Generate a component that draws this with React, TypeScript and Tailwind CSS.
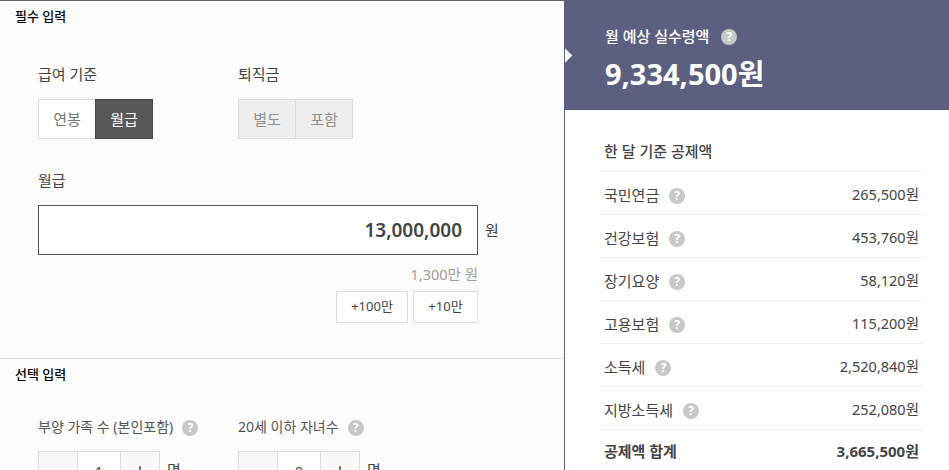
import { ReactNode } from 'react';

const FONT = '"Noto Sans", "Noto Sans CJK KR", sans-serif';

const Help = ({ className = '' }: { className?: string }) => (
  <span className={`inline-flex h-4 w-4 shrink-0 items-center justify-center rounded-full bg-[#c8c8c8] text-[12px] leading-none font-bold text-white ${className}`}>?</span>
);

const Toggle = ({ items, active, disabled }: { items: string[]; active?: number; disabled?: boolean }) => (
  <div className="flex h-10 w-[115px]">
    {items.map((item, i) => (
      <div
        key={item}
        className={`flex h-10 flex-1 items-center justify-center border text-[15px] ${i > 0 ? '-ml-px' : ''} ${
          i === active
            ? 'z-10 border-[#484848] bg-[#585858] text-white'
            : disabled
              ? 'border-[#dcdcdc] bg-[#eeeeee] text-[#8f8f8f]'
              : 'border-[#dcdcdc] bg-white text-[#777777]'
        }`}
      >
        {item}
      </div>
    ))}
  </div>
);

const Stepper = ({ value }: { value: string }) => (
  <div className="flex items-start">
    <div className="flex h-10 w-[122px] border border-[#dcdcdc] bg-white text-[#444]">
      <div className="flex w-[39px] items-center justify-center border-r border-[#dcdcdc] bg-[#f8f8f8]" />
      <div className="flex flex-1 items-center justify-center text-[14px]">{value}</div>
      <div className="flex w-[39px] items-center justify-center border-l border-[#dcdcdc] bg-[#f8f8f8] text-[20px] leading-none">+</div>
    </div>
    <span className="ml-[7px] pt-[9px] text-[15px] leading-[20px] text-[#444]">명</span>
  </div>
);

const Row = ({ label, value }: { label: string; value: string }) => (
  <div className="flex h-[43px] items-center justify-between border-t border-[#f0f0f0] px-[5px] pt-1 text-[#444]">
    <div className="flex items-center text-[15px]">
      <span>{label}</span>
      <Help className="ml-[10px] mt-0.5" />
    </div>
    <span className="text-[14.5px]">{value}</span>
  </div>
);

const Section = ({ title, children }: { title: string; children: ReactNode }) => (
  <section className="pl-[15px]">
    <h2 className="pt-[6px] text-[13px] leading-[18px] font-medium text-black">{title}</h2>
    {children}
  </section>
);

export default function App() {
  return (
    <div className="flex h-[470px] w-[949px] overflow-hidden bg-white" style={{ fontFamily: FONT }}>
      {/* 입력 영역 */}
      <div className="h-[470px] w-[565px] shrink-0 overflow-hidden border-t border-r border-t-[#666] border-r-[#5c5f7f] bg-[#fcfcfc]">
        <div className="h-[358px] border-b border-[#dddddd]">
          <Section title="필수 입력">
            <div className="mt-[39px] flex pl-[23px]">
              <div className="w-[200px]">
                <div className="text-[15px] leading-5 text-[#444]">급여 기준</div>
                <div className="mt-[15px]">
                  <Toggle items={['연봉', '월급']} active={1} />
                </div>
              </div>
              <div>
                <div className="text-[15px] leading-5 text-[#444]">퇴직금</div>
                <div className="mt-[15px]">
                  <Toggle items={['별도', '포함']} disabled />
                </div>
              </div>
            </div>
            <div className="mt-[31px] pl-[23px] text-[15px] leading-5 text-[#444]">월급</div>
            <div className="mt-[15px] flex items-center pl-[23px]">
              <div className="flex h-[50px] w-[440px] items-center justify-end border border-[#555] bg-white pr-[15px] text-[19px] font-semibold text-[#444]">
                13,000,000
              </div>
              <span className="ml-[7px] text-[15px] text-[#444]">원</span>
            </div>
            <div className="mt-[9px] w-[463px] text-right text-[14.5px] leading-5 text-[#a59d96]">1,300만 원</div>
            <div className="mt-[7px] flex w-[463px] justify-end gap-[5px]">
              <div className="flex h-8 w-[72px] items-center justify-center border border-[#dcdcdc] bg-white text-[13px] text-[#444]">+100만</div>
              <div className="flex h-8 w-[65px] items-center justify-center border border-[#dcdcdc] bg-white text-[13px] text-[#444]">+10만</div>
            </div>
          </Section>
        </div>
        <Section title="선택 입력">
          <div className="mt-[34px] flex pl-[23px]">
            <div className="w-[200px]">
              <div className="flex items-center text-[14px] leading-5 text-[#555]">
                부양 가족 수 (본인포함)
                <Help className="ml-[9px] mt-0.5" />
              </div>
              <div className="mt-[14px]">
                <Stepper value="1" />
              </div>
            </div>
            <div>
              <div className="flex items-center text-[14px] leading-5 text-[#555]">
                20세 이하 자녀수
                <Help className="ml-[9px] mt-0.5" />
              </div>
              <div className="mt-[14px]">
                <Stepper value="0" />
              </div>
            </div>
          </div>
        </Section>
      </div>

      {/* 결과 영역 */}
      <div className="relative h-[470px] flex-1 overflow-hidden">
        <div className="absolute top-[50px] -left-[6px] h-[11px] w-[11px] rotate-45 bg-[#fcfcfc]" />
        <div className="h-[110px] bg-[#5c5f7f] pt-[25px] pl-10 text-white">
          <div className="flex items-center text-[15px] leading-[22px] font-medium">
            월 예상 실수령액
            <Help className="ml-3 mt-0.5" />
          </div>
          <div className="mt-[8px] text-[29px] leading-[38px] font-bold">9,334,500원</div>
        </div>
        <div className="px-[34px] pr-[25px] pt-[31px]">
          <h3 className="px-[5px] pb-[9px] text-[15px] leading-[21px] font-medium text-[#444]">한 달 기준 공제액</h3>
          <Row label="국민연금" value="265,500원" />
          <Row label="건강보험" value="453,760원" />
          <Row label="장기요양" value="58,120원" />
          <Row label="고용보험" value="115,200원" />
          <Row label="소득세" value="2,520,840원" />
          <Row label="지방소득세" value="252,080원" />
          <div className="flex h-[43px] items-center justify-between border-t border-[#f0f0f0] px-[5px] text-[15px] font-bold text-[#444]">
            <span>공제액 합계</span>
            <span>3,665,500원</span>
          </div>
        </div>
      </div>
    </div>
  );
}
